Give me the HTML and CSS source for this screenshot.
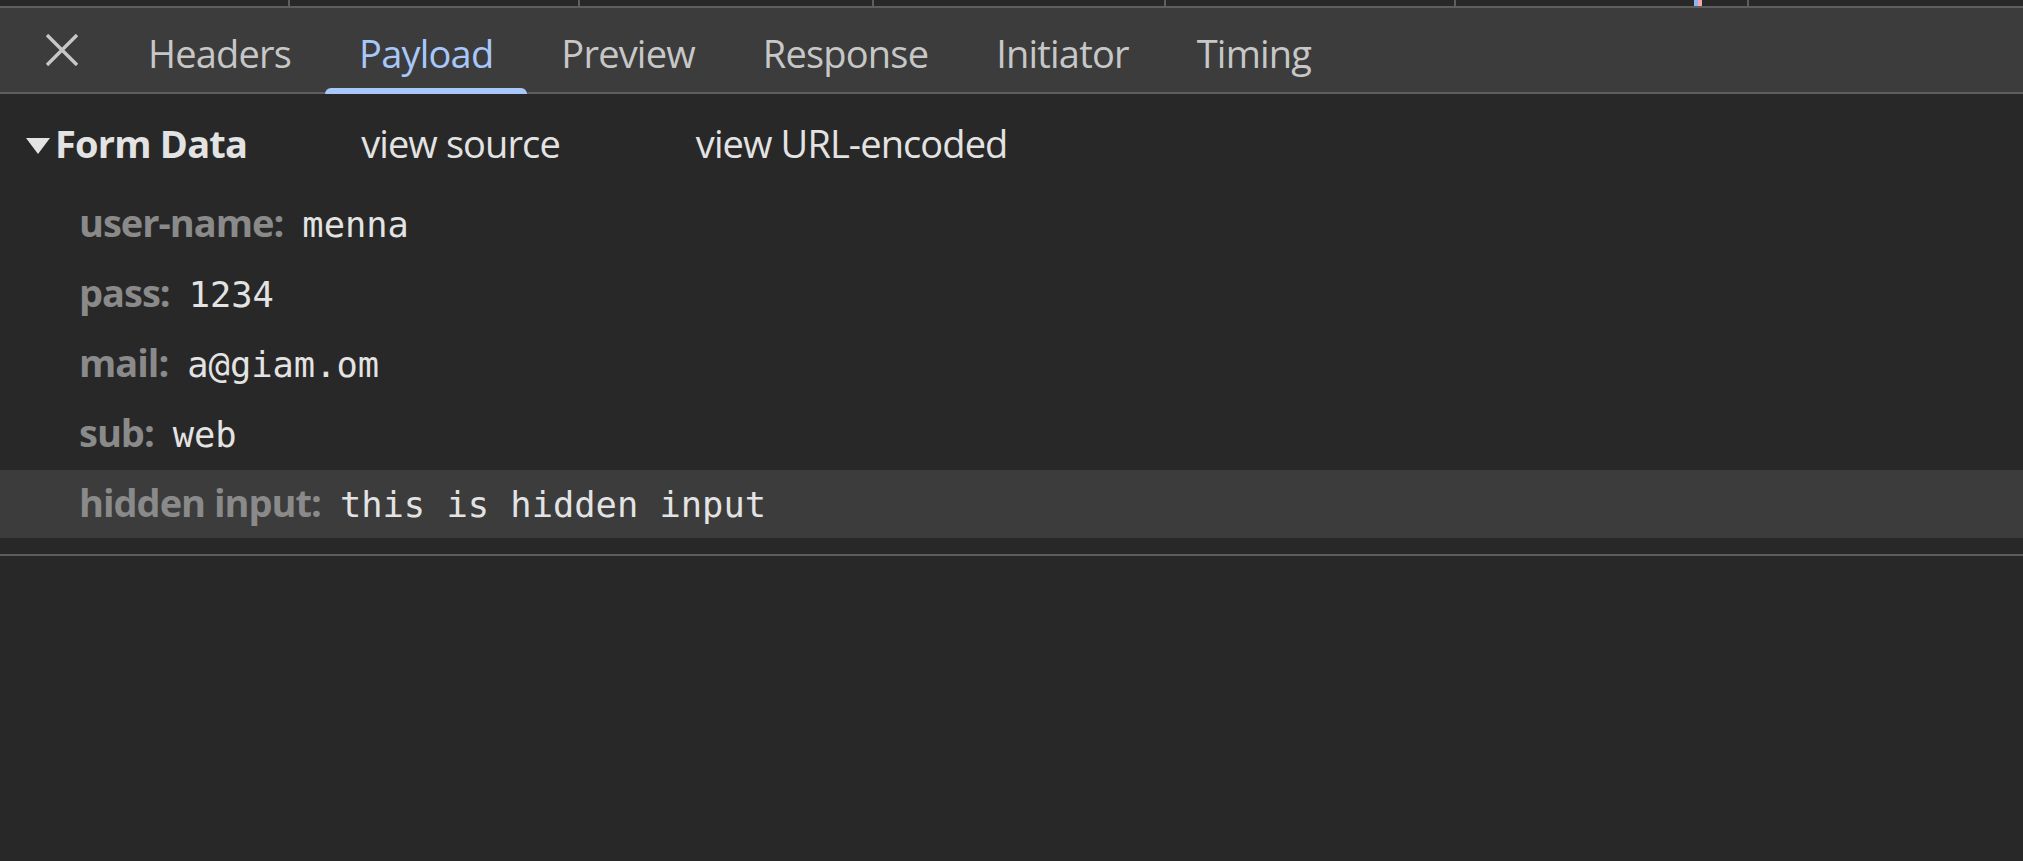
FILE: index.html
```html
<!DOCTYPE html>
<html lang="en">
<head>
<meta charset="utf-8">
<title>Payload</title>
<link rel="stylesheet" href="styles.css">
</head>
<body>
<div class="strip">
  <div class="cell"></div>
  <div class="cell"></div>
  <div class="cell"></div>
  <div class="cell"></div>
  <div class="cell"></div>
  <div class="cell waterfall"><span class="bar bar-wait"></span><span class="bar bar-recv"></span></div>
  <div class="cell"></div>
</div>
<div class="toolbar">
  <button class="close" aria-label="Close">
    <svg width="32" height="32" viewBox="0 0 32 32"><path d="M1 1 L31 31 M31 1 L1 31" stroke="#c7c7c7" stroke-width="3.4" fill="none"/></svg>
  </button>
  <div class="tabs">
    <div class="tab">Headers</div>
    <div class="tab active">Payload</div>
    <div class="tab">Preview</div>
    <div class="tab">Response</div>
    <div class="tab">Initiator</div>
    <div class="tab">Timing</div>
  </div>
</div>
<div class="content">
  <div class="section-head">
    <svg class="caret" width="24" height="16" viewBox="0 0 24 16"><polygon points="0,0 24,0 12,16" fill="#e3e3e3"/></svg>
    <span class="section-title">Form Data</span>
    <span class="link link-source">view source</span>
    <span class="link link-url">view URL-encoded</span>
  </div>
  <div class="rows">
    <div class="row"><span class="name">user-name:</span><span class="value">menna</span></div>
    <div class="row"><span class="name">pass:</span><span class="value">1234</span></div>
    <div class="row"><span class="name">mail:</span><span class="value">a@giam.om</span></div>
    <div class="row"><span class="name">sub:</span><span class="value">web</span></div>
    <div class="row hover"><span class="name">hidden input:</span><span class="value">this is hidden input</span></div>
  </div>
  <div class="divider"></div>
</div>
</body>
</html>
```

FILE: styles.css
```css
* { box-sizing: border-box; }
html, body {
  margin: 0;
  padding: 0;
  background: #282828;
  height: 100%;
  overflow: hidden;
}
body {
  font-family: "Open Sans", "Noto Sans", sans-serif;
  color: #e3e3e3;
}

.strip {
  display: grid;
  grid-template-columns: 288px 290px 294px 292px 290px 293px 1fr;
  height: 8px;
  border-bottom: 2px solid #5e5e5e;
  background: #282828;
}
.cell + .cell {
  border-left: 2px solid #5e5e5e;
}
.waterfall {
  display: flex;
  padding-left: 238px;
}
.bar { display: block; width: 4px; height: 100%; }
.bar-wait { background: #8ab4f8; }
.bar-recv { background: #f4a7a7; }

.toolbar {
  display: flex;
  align-items: center;
  height: 86px;
  background: #3c3c3c;
  border-bottom: 2px solid #5e5e5e;
  padding-left: 46px;
}
.close {
  display: flex;
  width: 32px;
  height: 32px;
  padding: 0;
  border: 0;
  background: none;
  margin-right: 36px;
}
.tabs {
  display: flex;
  align-self: stretch;
}
.tab {
  position: relative;
  display: flex;
  align-items: center;
  padding: 6px 34px 0;
  font-size: 38px;
  letter-spacing: -0.8px;
  color: #c7c7c7;
  white-space: nowrap;
}
.tab.active { color: #a8c7fa; }
.tab.active::after {
  content: "";
  position: absolute;
  left: 0;
  right: 0;
  bottom: -2px;
  height: 6px;
  background: #a8c7fa;
  border-radius: 6px 6px 0 0;
}

.content {
  padding-top: 23px;
}
.section-head {
  display: flex;
  align-items: baseline;
  height: 52px;
  line-height: 52px;
  padding-left: 26px;
  font-size: 38px;
}
.caret {
  align-self: center;
  margin-top: 6px;
  margin-right: 5px;
}
.section-title {
  font-weight: 700;
  letter-spacing: -0.8px;
  color: #e3e3e3;
}
.link {
  color: #e3e3e3;
  letter-spacing: -0.9px;
}
.link-source { margin-left: 114px; }
.link-url { margin-left: 136px; }

.rows {
  display: flex;
  flex-direction: column;
  gap: 2px;
  margin-top: 21px;
}
.row {
  height: 68px;
  line-height: 64px;
  padding-left: 79px;
  font-size: 38px;
  white-space: nowrap;
}
.row.hover { background: #3c3c3c; }
.name {
  font-weight: 700;
  color: #8a8a8a;
  letter-spacing: -1px;
  margin-right: 19px;
}
.value {
  font-family: "DejaVu Sans Mono", "Liberation Mono", monospace;
  font-size: 35.4px;
  color: #e3e3e3;
}
.divider {
  margin-top: 16px;
  height: 2px;
  background: #5c5c5c;
}
```
